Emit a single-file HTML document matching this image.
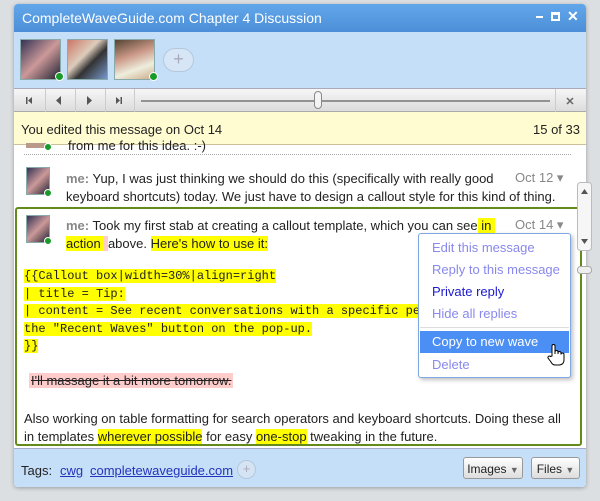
<!DOCTYPE html>
<html><head><style>
*{margin:0;padding:0;box-sizing:border-box}
body{width:600px;height:501px;background:#dcdfe2;font-family:"Liberation Sans",Arial,sans-serif;position:relative;overflow:hidden;font-size:13px;color:#222}
.a{position:absolute;white-space:nowrap}
.win{left:14px;top:4px;width:572px;height:483px;background:#fff;border-radius:4px;box-shadow:0 1px 4px rgba(0,0,0,.3);overflow:hidden}
.title{left:0;top:0;width:572px;height:28px;background:linear-gradient(#62a6ea,#4c8fd8);color:#fff;font-size:14px;padding:6px 8px}
.parts{left:0;top:28px;width:572px;height:57px;background:#c6dff8;border-bottom:1px solid #aab}
.av{width:41px;height:41px;border:1px solid #8aa;top:7px}
.dot{width:9px;height:9px;border-radius:50%;background:#1a9a28;border:1px solid #fff}
.play{left:0;top:85px;width:572px;height:23px;background:linear-gradient(#f6f6f6,#dcdcdc);border-bottom:1px solid #aaa}
.yel{left:0;top:108px;width:572px;height:33px;background:#fffcd2;border-bottom:1px solid #ccc09a;font-size:13px;padding:10px 7px}
.hl{background:#ffff00}
.mono{font-family:"Liberation Mono",monospace;font-size:12px}
.menu{left:404px;top:229px;width:153px;height:145px;background:#fff;border:1px solid #7fa7e0;border-radius:3px;box-shadow:2px 2px 4px rgba(0,0,0,.25);font-size:13px}
.menu div{position:absolute;left:0;width:151px;padding-left:13px;color:#8888ee}
.foot{left:0;top:444px;width:572px;height:39px;background:#c6dff8;border-top:1px solid #aac}
.btn{border:1px solid #999;border-radius:3px;background:linear-gradient(#fff,#ddd);font-size:12px;height:22px;padding:4px 0;color:#222;text-align:center}
</style></head><body>
<div class="a win">
 <div class="a title">CompleteWaveGuide.com Chapter 4 Discussion
  <span class="a" style="left:522px;top:12px;width:7px;height:2px;background:#fff"></span>
  <span class="a" style="left:537px;top:8px;width:9px;height:9px;border:2px solid #fff;border-top-width:3px"></span>
  <span class="a" style="left:553px;top:4px;font-weight:bold">✕</span>
 </div>
 <div class="a parts">
  <div class="a av" style="left:6px;background:linear-gradient(135deg,#335,#c99 50%,#223)"></div>
  <div class="a dot" style="left:41px;top:40px"></div>
  <div class="a av" style="left:53px;background:linear-gradient(135deg,#c76,#dcb 40%,#333 60%,#79c)"></div>
  <div class="a av" style="left:100px;background:linear-gradient(160deg,#543,#c98 40%,#eed 70%,#ca8)"></div>
  <div class="a dot" style="left:135px;top:40px"></div>
  <div class="a" style="left:149px;top:16px;width:31px;height:24px;border-radius:12px;background:#d6e6f6;border:1px solid #b4c8dc;color:#aab;text-align:center;font-size:18px;line-height:21px">+</div>
 </div>
 <div class="a play">
  <svg class="a" style="left:0;top:0" width="572" height="23">
   <g fill="#555"><rect x="12" y="8" width="1.5" height="7"/><path d="M18 8v7l-4-3.5z"/>
   <path d="M47 7v9l-5-4.5z"/><path d="M73 7v9l5-4.5z"/>
   <path d="M102 8v7l4-3.5z"/><rect x="106.5" y="8" width="1.5" height="7"/></g>
   <g stroke="#ccc"><line x1="31.5" y1="0" x2="31.5" y2="23"/><line x1="61.5" y1="0" x2="61.5" y2="23"/><line x1="91.5" y1="0" x2="91.5" y2="23"/><line x1="120.5" y1="0" x2="120.5" y2="23"/><line x1="541.5" y1="0" x2="541.5" y2="23"/></g>
   <line x1="127" y1="12" x2="536" y2="12" stroke="#777" stroke-width="1.5"/>
   <rect x="300.5" y="2.5" width="7" height="17" rx="3.5" fill="#f4f4f4" stroke="#888"/>
   <path d="M553 9l6 6M559 9l-6 6" stroke="#666" stroke-width="1.5"/>
  </svg>
 </div>
 <div class="a yel">You edited this message on Oct 14<span class="a" style="right:6px;top:10px">15 of 33</span></div>
 <div class="a" style="left:12px;top:139px;width:20px;height:5px;background:#b98"></div>
 <div class="a dot" style="left:30px;top:139px;width:8px;height:8px"></div>
 <div class="a" style="left:54px;top:134px">from me for this idea. :-)</div>
 <div class="a" style="left:10px;top:150px;width:547px;border-top:1px dotted #aaa"></div>
 <div class="a av" style="left:12px;top:163px;width:24px;height:28px;background:linear-gradient(135deg,#335,#c99 50%,#223)"></div>
 <div class="a dot" style="left:30px;top:185px;width:8px;height:8px"></div>
 <div class="a" style="left:52px;top:166px;line-height:18px"><b style="color:#888">me:</b> Yup, I was just thinking we should do this (specifically with really good<br>keyboard shortcuts) today. We just have to design a callout style for this kind of thing.</div>
 <div class="a" style="left:501px;top:166px;color:#888">Oct 12 ▾</div>
 <div class="a" style="left:1px;top:203px;width:567px;height:239px;border:2px solid #658a1c;border-radius:3px"></div>
 <div class="a av" style="left:12px;top:211px;width:24px;height:28px;background:linear-gradient(135deg,#335,#c99 50%,#223)"></div>
 <div class="a dot" style="left:30px;top:233px;width:8px;height:8px"></div>
 <div class="a" style="left:52px;top:213px;line-height:18px"><b style="color:#888">me:</b> Took my first stab at creating a callout template, which you can see<span class="hl">&nbsp;in&nbsp;</span><br><span class="hl">action </span><span style="background:#fcc">&nbsp;</span>above. <span class="hl">Here's how to use it:</span></div>
 <div class="a" style="left:501px;top:213px;color:#888">Oct 14 ▾</div>
 <div class="a mono" style="left:10px;top:264px;line-height:17.6px">
  <span class="hl">{{Callout box|width=30%|align=right </span><br>
  <span class="hl">| title = Tip: </span><br>
  <span class="hl">| content = See recent conversations with a specific per</span><br>
  <span class="hl">the "Recent Waves" button on the pop-up.</span><br>
  <span class="hl">}}</span></div>
 <div class="a" style="left:15px;top:369px;background:#fcc;text-decoration:line-through;padding:0 2px">I'll massage it a bit more tomorrow.</div>
 <div class="a" style="left:10px;top:406px;line-height:18px">Also working on table formatting for search operators and keyboard shortcuts. Doing these all<br>in templates <span class="hl">wherever possible</span> for easy <span class="hl">one-stop</span> tweaking in the future.</div>
 <div class="a menu">
  <div style="top:6px">Edit this message</div>
  <div style="top:28px">Reply to this message</div>
  <div style="top:50px;color:#1a1acc">Private reply</div>
  <div style="top:72px">Hide all replies</div>
  <div style="top:93px;border-top:1px solid #ddd;width:149px;left:1px;height:1px"></div>
  <div style="top:97px;left:1px;width:149px;height:22px;background:#4c8ff4;color:#fff;padding-top:3px;padding-left:12px">Copy to new wave</div>
  <div style="top:123px">Delete</div>
 </div>
 <svg class="a" style="left:533px;top:339px" width="18" height="24"><path d="M5 13V3a1.5 1.5 0 0 1 3 0v8V9a1.5 1.5 0 0 1 3 0v2-1a1.5 1.5 0 0 1 3 0v1.5a1.5 1.5 0 0 1 3 0V17c0 3-2 5-5 5H8c-2 0-3-1-4-3l-3-4a1.5 1.5 0 0 1 2.5-1.5z" fill="#fff" stroke="#000"/></svg>
 <div class="a foot">
  <span class="a" style="left:7px;top:14px">Tags:</span>
  <span class="a" style="left:46px;top:14px;color:#2233bb;text-decoration:underline">cwg</span>
  <span class="a" style="left:76px;top:14px;color:#2233bb;text-decoration:underline">completewaveguide.com</span>
  <span class="a" style="left:223px;top:11px;width:19px;height:19px;border-radius:50%;background:#d4e4f4;border:1px solid #b4c8dc;color:#aab;text-align:center;line-height:16px">+</span>
  <span class="a btn" style="left:449px;top:8px;width:60px">Images <span style="font-size:9px;color:#666">▼</span></span>
  <span class="a btn" style="left:517px;top:8px;width:49px">Files <span style="font-size:9px;color:#666">▼</span></span>
 </div>
</div>
<svg class="a" style="left:577px;top:182px" width="16" height="94">
 <rect x="0.5" y="0.5" width="14" height="68" rx="3" fill="#f6f6f6" stroke="#bbb"/>
 <path d="M4 12l3.5-5 3.5 5z M4 57l3.5 5 3.5-5z" fill="#555"/>
 <rect x="0.5" y="84.5" width="14" height="7" rx="3" fill="#eee" stroke="#aaa"/>
</svg>
</body></html>
